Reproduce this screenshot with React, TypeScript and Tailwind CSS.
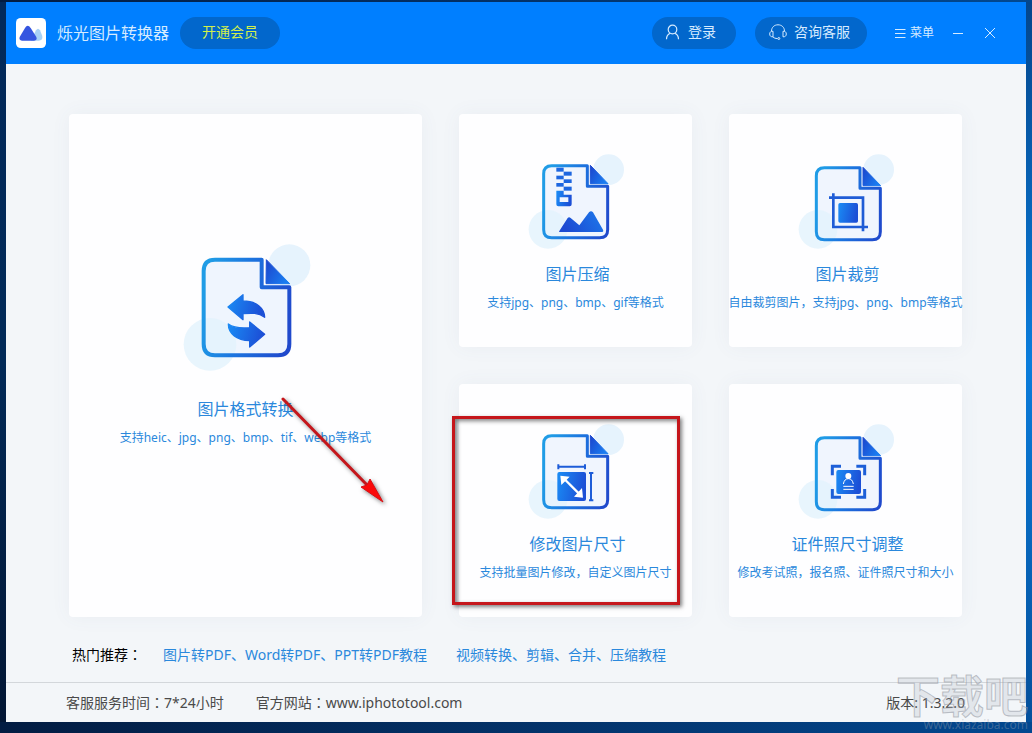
import React from 'react';

type ToolKind = 'convert' | 'compress' | 'crop' | 'resize' | 'idphoto';

interface Tool {
  kind: ToolKind;
  title: string;
  desc: string;
}

const mainTool: Tool = {
  kind: 'convert',
  title: '图片格式转换',
  desc: '支持heic、jpg、png、bmp、tif、webp等格式',
};

const tools: Tool[] = [
  { kind: 'compress', title: '图片压缩', desc: '支持jpg、png、bmp、gif等格式' },
  { kind: 'crop', title: '图片裁剪', desc: '自由裁剪图片，支持jpg、png、bmp等格式' },
  { kind: 'resize', title: '修改图片尺寸', desc: '支持批量图片修改，自定义图片尺寸' },
  { kind: 'idphoto', title: '证件照尺寸调整', desc: '修改考试照，报名照、证件照尺寸和大小' },
];

function Gradients() {
  return (
    <svg className="absolute size-0" aria-hidden="true">
      <defs>
        <linearGradient id="edge" gradientUnits="userSpaceOnUse" x1="70" y1="180" x2="270" y2="220">
          <stop offset="0" stopColor="#209ce6" />
          <stop offset="0.45" stopColor="#1c74df" />
          <stop offset="1" stopColor="#2049cc" />
        </linearGradient>
        <linearGradient id="edgeLarge" gradientUnits="userSpaceOnUse" x1="95" y1="200" x2="360" y2="250">
          <stop offset="0" stopColor="#209ce6" />
          <stop offset="0.45" stopColor="#1c74df" />
          <stop offset="1" stopColor="#2049cc" />
        </linearGradient>
        <linearGradient id="solid" x1="0" y1="0" x2="1" y2="0.2">
          <stop offset="0" stopColor="#1a8cf5" />
          <stop offset="1" stopColor="#1c4fd6" />
        </linearGradient>
        <linearGradient id="fold" x1="0" y1="0" x2="1" y2="0.6">
          <stop offset="0" stopColor="#1c44cc" />
          <stop offset="1" stopColor="#1a7cf0" />
        </linearGradient>
        <linearGradient id="dark" x1="0" y1="0.3" x2="1" y2="0">
          <stop offset="0" stopColor="#1c4ad2" />
          <stop offset="1" stopColor="#1d7aec" />
        </linearGradient>
      </defs>
    </svg>
  );
}

function ConvertIcon() {
  return (
    <svg className="h-[145px] w-[150px]" viewBox="0 0 450 435" fill="none" aria-hidden="true">
      <circle cx="355" cy="91" r="63" fill="#e6f3fd" />
      <path d="M272 74V157H355V327Q355 361 321 361H132Q98 361 98 327V108Q98 74 132 74Z" fill="#eff5fe" />
      <circle cx="117" cy="328" r="79" fill="#e2f2fd" fillOpacity="0.8" />
      <path d="M272 74V157H355V327Q355 361 321 361H132Q98 361 98 327V108Q98 74 132 74Z" stroke="url(#edgeLarge)" strokeWidth="12" strokeLinejoin="round" />
      <path d="M286 74L356 146H285Z" fill="url(#fold)" stroke="url(#fold)" strokeWidth="3" strokeLinejoin="round" />
      <path d="M171 216L216 179V198C256 198 280 220 281 247C262 232 240 234 216 236V254Z" fill="url(#solid)" stroke="url(#solid)" strokeWidth="4" strokeLinejoin="round" />
      <path d="M281 298L236 261V278C212 280 190 280 172 267C172 294 196 317 236 317V336Z" fill="url(#solid)" stroke="url(#solid)" strokeWidth="4" strokeLinejoin="round" />
    </svg>
  );
}

function CompressGlyph() {
  return (
    <>
      <g fill="#1d66e0">
        <rect x="109" y="68" width="22" height="12" />
        <rect x="131" y="80" width="24" height="12" />
        <rect x="109" y="92" width="22" height="11" />
        <rect x="131" y="103" width="24" height="11" />
        <rect x="109" y="114" width="22" height="11" />
        <rect x="131" y="125" width="24" height="12" />
      </g>
      <path d="M109 137H131V149H155V178Q155 184 149 184H115Q109 184 109 178ZM119 157V171H145V157Z" fill="url(#solid)" fillRule="evenodd" />
      <path d="M118 258L143 219Q147 214 152 219L178 241L207 202Q213 195 219 202L249 254Q252 261 244 261H119Q115 261 118 258Z" fill="url(#dark)" />
    </>
  );
}

function CropGlyph() {
  return (
    <>
      <path d="M130 145V246H234M117 158H219V259" stroke="#1f5cd6" strokeWidth="8" />
      <rect x="145" y="174" width="59" height="59" rx="5" fill="url(#solid)" />
    </>
  );
}

function ResizeGlyph() {
  return (
    <>
      <path d="M114 155H196M213 173V257" stroke="#1d5cd8" strokeWidth="6" />
      <path d="M115 148V163M195 148V163M207 174H220M207 256H220" stroke="#1d5cd8" strokeWidth="6" />
      <rect x="112" y="171" width="86" height="87" rx="6" fill="url(#solid)" />
      <path d="M130 189L180 239" stroke="#fff" strokeWidth="7" />
      <path d="M121 182L149 185L124 210ZM189 248L162 245L186 219Z" fill="#fff" />
    </>
  );
}

function IdPhotoGlyph() {
  return (
    <>
      <path d="M127 181V154H153M199 154H224V181M224 222V247H199M153 247H127V222" stroke="#1d5fd8" strokeWidth="9" />
      <rect x="139" y="165" width="74" height="72" rx="6" fill="url(#solid)" />
      <circle cx="175" cy="183" r="9" fill="#fff" />
      <path d="M160 207Q163 191 175 191Q187 191 190 207" stroke="#fff" strokeWidth="3" />
      <path d="M160 214H191M160 223H191" stroke="#fff" strokeWidth="3" />
    </>
  );
}

function SmallIcon({ kind }: { kind: ToolKind }) {
  const lower = kind === 'crop' || kind === 'idphoto';
  return (
    <svg className="h-[110px] w-[115px]" viewBox="0 0 345 330" fill="none" aria-hidden="true">
      <circle cx="266" cy="74" r="46" fill="#e6f3fd" />
      <g transform={lower ? 'translate(8 6)' : undefined}>
        <path d="M202 62V124H263V254Q263 278 239 278H95Q71 278 71 254V86Q71 62 95 62Z" fill="#f0f5fe" />
      </g>
      <circle cx="84" cy="253" r="58" fill="#e2f2fd" fillOpacity="0.8" />
      <g transform={lower ? 'translate(8 6)' : undefined}>
        <path d="M202 62V124H263V254Q263 278 239 278H95Q71 278 71 254V86Q71 62 95 62Z" stroke="url(#edge)" strokeWidth="9" strokeLinejoin="round" />
        <path d="M211 61L264 116H211Z" fill="url(#fold)" stroke="url(#fold)" strokeWidth="3" strokeLinejoin="round" />
      </g>
      {kind === 'compress' && <CompressGlyph />}
      {kind === 'crop' && <CropGlyph />}
      {kind === 'resize' && <ResizeGlyph />}
      {kind === 'idphoto' && <IdPhotoGlyph />}
    </svg>
  );
}

function ToolCard({ tool, large = false }: { tool: Tool; large?: boolean }) {
  return (
    <button
      type="button"
      className={`flex size-full flex-col items-center rounded bg-[#fefeff] shadow-[0_0_20px_rgba(90,110,140,0.06)] ${
        large ? 'pt-[121px]' : 'pt-[31px]'
      }`}
    >
      <span className={`flex flex-col items-center ${large ? 'gap-[17px]' : 'gap-[7px] pl-1'}`}>
        {large ? <ConvertIcon /> : <SmallIcon kind={tool.kind} />}
        <span className="text-base leading-6 text-[#2a88dc]">{tool.title}</span>
      </span>
      <span className="mt-[7px] whitespace-nowrap text-xs leading-5 text-[#2a88dc]">{tool.desc}</span>
    </button>
  );
}

function Header() {
  return (
    <header className="flex h-[62px] items-center bg-[#007fff] pr-[30px] pl-2.5 text-[#d6ebff]">
      <svg className="size-[30px]" viewBox="0 0 90 90" aria-hidden="true">
        <rect width="90" height="90" rx="14" fill="#fff" />
        <path d="M44 68L60 37Q66 28 72 37L79 54Q81 68 68 68Z" fill="#a9d2f6" />
        <path d="M11 57L27 30Q35 17 44 30L61 57Q65 67 54 68H18Q8 67 11 57Z" fill="#3556e0" />
      </svg>
      <h1 className="ml-[11px] text-base">烁光图片转换器</h1>
      <button type="button" className="ml-[11px] h-8 w-[100px] rounded-full bg-[#0267cc] pb-0.5 text-sm text-[#d3f04a]">
        开通会员
      </button>

      <div className="ml-auto flex items-center">
        <button type="button" className="flex h-8 w-[84px] items-center gap-[7px] rounded-full bg-[#0267cc] pb-0.5 pl-[13px] text-sm">
          <svg className="size-4" viewBox="0 0 16 16" fill="none" stroke="currentColor" strokeWidth="1.2" aria-hidden="true">
            <circle cx="7.5" cy="5.5" r="4.3" />
            <path d="M1.5 15.2C1.5 12.2 3 10.2 5.2 9.2M9.8 9.2C12 10.2 13.5 12.2 13.5 15.2" />
          </svg>
          登录
        </button>
        <button type="button" className="ml-[19px] flex h-8 w-28 items-center gap-[7px] rounded-full bg-[#0267cc] pb-0.5 pl-3.5 text-sm">
          <svg className="h-4 w-[18px]" viewBox="0 0 18 16" fill="none" stroke="currentColor" aria-hidden="true">
            <path d="M2.5 7.2C2.5 3.4 5.2 .8 9 .8S15.5 3.4 15.5 7.2" />
            <path d="M4 7.3V12.8C2 13 .7 12 .7 10S2 7 4 7.3ZM14 7.3V12.8C16 13 17.3 12 17.3 10S16 7 14 7.3ZM4 13Q5.500 14.6 8.500 14.6" />
            <circle cx="9.8" cy="14.5" r="1" />
          </svg>
          咨询客服
        </button>
        <button type="button" className="ml-7 flex items-center gap-1 text-xs">
          <svg className="h-[11px] w-[11px]" viewBox="0 0 11 11" stroke="currentColor" aria-hidden="true">
            <path d="M0 1.5H10.5M0 5.5H10.5M0 9.5H10.5" />
          </svg>
          菜单
        </button>
        <button type="button" aria-label="最小化" className="ml-[18px]">
          <svg className="size-3" viewBox="0 0 12 12" stroke="currentColor" aria-hidden="true">
            <path d="M1 6.5H11" />
          </svg>
        </button>
        <button type="button" aria-label="关闭" className="ml-5">
          <svg className="size-3" viewBox="0 0 12 12" stroke="currentColor" aria-hidden="true">
            <path d="M1 1L11 11M11 1L1 11" />
          </svg>
        </button>
      </div>
    </header>
  );
}

function Arrow() {
  return (
    <svg
      className="pointer-events-none absolute top-[280px] left-[208px] size-[115px] drop-shadow-[2px_2px_2px_rgba(0,0,0,0.5)]"
      viewBox="0 0 115 115"
      aria-hidden="true"
    >
      <path d="M6 5L92 93" stroke="#c5161b" strokeWidth="3" strokeLinecap="round" />
      <path d="M106 108L84 93L90 91L93 85Z" fill="#fb0a0a" stroke="#d81015" />
    </svg>
  );
}

export default function App() {
  return (
    <div className="relative min-h-screen overflow-hidden bg-linear-to-r from-[#021c42] to-[#024890] pt-0.5 pb-[11px] font-['Noto_Sans','Noto_Sans_CJK_SC',sans-serif]">
      <Gradients />
      <div className="flex">
        <div className="w-1.5 bg-linear-to-b from-[#02295a] via-[#022a58] to-[#021634]" />
        <div className="min-w-0 flex-1 bg-[#f3f6f9]">
          <Header />

          <main className="pt-[50px] pr-16 pl-[63px]">
            <div className="grid grid-cols-[353fr_233fr_233fr] grid-rows-[233px_233px] gap-[37px]">
              <div className="relative row-span-2 min-w-0">
                <ToolCard tool={mainTool} large />
                <Arrow />
              </div>
              {tools.map((tool) => (
                <div key={tool.kind} className="relative min-w-0">
                  <ToolCard tool={tool} />
                  {tool.kind === 'resize' && (
                    <div className="pointer-events-none absolute top-8 right-3 bottom-3 -left-[7px] border-3 border-[#c5161b] shadow-[2px_2px_4px_rgba(0,0,0,0.5),inset_2px_2px_4px_rgba(0,0,0,0.5)]" />
                  )}
                </div>
              ))}
            </div>

            <div className="flex h-[65px] items-center pt-2.5 pl-[3px] text-sm">
              <span className="w-[91px] font-['Noto_Sans','Noto_Sans_CJK_JP',sans-serif] text-black">热门推荐：</span>
              <a href="#pdf" className="text-[#2a88dc]">图片转PDF、Word转PDF、PPT转PDF教程</a>
              <a href="#video" className="ml-[29px] text-[#2a88dc]">视频转换、剪辑、合并、压缩教程</a>
            </div>
          </main>

          <footer className="flex h-10 items-center border-t border-[#d3d7db] pr-[61px] pl-[60px] font-['Noto_Sans','Noto_Sans_CJK_JP',sans-serif] text-sm text-[#4a4a4a]">
            <span>客服服务时间：7*24小时</span>
            <span className="ml-8">官方网站：www.iphototool.com</span>
            <span className="ml-auto">版本: 1.3.2.0</span>
          </footer>
        </div>
        <div className="w-1.5 bg-linear-to-b from-[#04468c] via-[#0a7ddc] to-[#04509c]" />
      </div>

      {/* watermark */}
      <div className="pointer-events-none absolute right-1 bottom-0 flex flex-col items-end text-right">
        <span className="text-[44px] leading-[42px] font-bold text-gray-400/20 [-webkit-text-stroke:1px_rgba(150,155,165,0.6)]">下载吧</span>
        <span className="text-xs leading-4 text-gray-400/40">www.xiazaiba.com</span>
      </div>
    </div>
  );
}
